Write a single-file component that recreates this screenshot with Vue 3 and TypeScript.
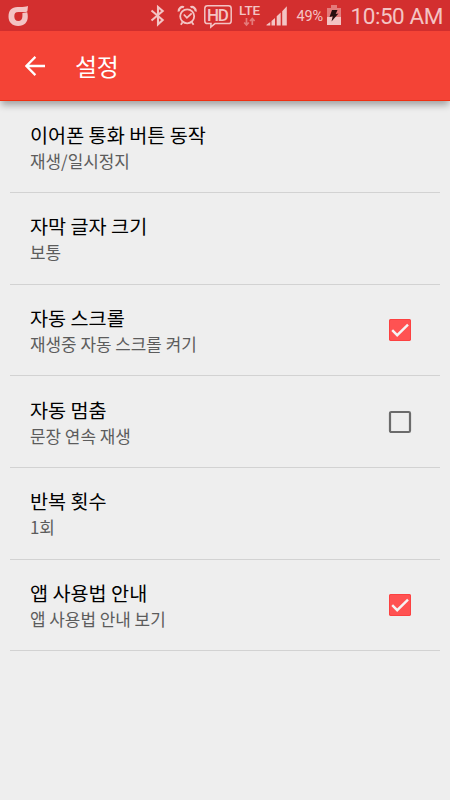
<script setup lang="ts">
interface Setting {
  title: string
  summary: string
  checked?: boolean
}

const settings: Setting[] = [
  { title: '이어폰 통화 버튼 동작', summary: '재생/일시정지' },
  { title: '자막 글자 크기', summary: '보통' },
  { title: '자동 스크롤', summary: '재생중 자동 스크롤 켜기', checked: true },
  { title: '자동 멈춤', summary: '문장 연속 재생', checked: false },
  { title: '반복 횟수', summary: '1회' },
  { title: '앱 사용법 안내', summary: '앱 사용법 안내 보기', checked: true },
]
</script>

<template>
  <div class="screen">
    <header class="status">
      <svg class="status-icons" width="290" height="31" viewBox="0 0 290 31" fill="none" stroke="#f3c4c4">
        <path d="M28 6l-.6 5.200c-1.200 1-3.500 1-5.400.8h-3.500c-3.200 0-4.200 1.500-4.200 4.300 0 3.200 1.400 4.700 4 4.700s4.100-1.500 4.100-4.700V13l4.800-.7c.4 1.200.6 2.500.6 4.200 0 6-3.500 9.400-9.600 9.400S8.500 22.300 8.500 16.500C8.500 10.500 11.500 7 17.500 7 21.500 7 25 7.200 28 6z" fill="#f3c4c4" stroke="none" />
        <path d="M151.500 10.500l11.200 9.500-4.700 4.300V7l4.700 4-11.200 9.500" stroke-width="2.100" />
        <circle cx="187.200" cy="16.300" r="7" stroke-width="1.800" />
        <path d="M183.800 14.500l3.100 3.300 4.800-4.500M182.600 22.300l-1.800 2.500M191.800 22.300l1.800 2.500" stroke-width="1.800" />
        <path d="M178.700 11.500c-.4-3 2.700-5.500 5.200-4.200M195.700 11.500c.4-3-2.700-5.500-5.200-4.200" stroke-width="2.300" />
        <path d="M207.500 5.700h21q2.700 0 2.700 2.700v12.500q0 2.700-2.700 2.700H215l-4.200 3.400.2-3.400h-3.500q-2.700 0-2.700-2.700V8.400Q204.800 5.700 207.500 5.700z" stroke-width="1.500" />
        <path d="M246.500 18v7m-2.300-2.500l2.300 2.500 2.300-2.500M252.300 25v-6.500m-2.300 2.500l2.300-2.500 2.300 2.500" stroke="#e47b7b" stroke-width="1.700" />
        <g fill="#f3c4c4" stroke="none">
          <path d="M266.500 25.500v-.8l3.800-2.800v3.600zM271.500 25.500v-4.500l3.500-3v7.500zM276.700 25.500v-9.300l4-3.700v13zM282.200 25.500V11.200l4.600-5v19.300z" />
        </g>
      </svg>
      <span class="hd">HD</span>
      <span class="lte">LTE</span>
      <span class="percent">49%</span>
      <svg class="battery" width="14" height="21" viewBox="0 0 14 21">
        <path fill="#e47b7b" d="M4 0h6v3h4v9H0V3h4z" />
        <path fill="#f3c4c4" d="M0 12h14v8H0z" />
        <path fill="#281011" d="M5 5h5.500L8.700 9l2.800-.5L4.500 16.500l1.200-5.200-3.200.7z" />
      </svg>
      <time class="clock">10:50 AM</time>
    </header>

    <nav class="toolbar">
      <svg width="20" height="20" viewBox="0 0 20 20" fill="none" stroke="#fff" stroke-width="2.300">
        <path d="M10.400.9L1.400 10l9 9.100M1.800 10H20" />
      </svg>
      <h1>설정</h1>
    </nav>

    <main class="settings">
      <section v-for="item in settings" :key="item.title" class="row">
        <div class="copy">
          <h2>{{ item.title }}</h2>
          <p>{{ item.summary }}</p>
        </div>
        <svg v-if="item.checked" class="check" width="24" height="24" viewBox="0 0 24 24">
          <rect x="1" y="1" width="22" height="22" rx="1.800" fill="#ff5252" />
          <rect x="1.500" y="1.500" width="21" height="21" rx="1.300" fill="none" stroke="#fc4141" />
          <path d="M4.200 12.200l5 5L20 6.600" fill="none" stroke="#f5f5f5" stroke-width="2.400" />
        </svg>
        <svg v-else-if="item.checked === false" class="check" width="24" height="24" viewBox="0 0 24 24">
          <rect x="2" y="2" width="20" height="20" rx="1.300" fill="none" stroke="#6b6b6b" stroke-width="2.200" />
        </svg>
      </section>
    </main>
  </div>
</template>

<style>
body {
  background: #eee;
}
</style>

<style scoped>
.screen {
  width: 450px;
  height: 800px;
  overflow: hidden;
  background: #eee;
  font-family: "Noto Sans CJK KR", sans-serif;
}
.status {
  position: relative;
  height: 31px;
  background: #d32f2f;
  color: #f3c4c4;
  font-family: Roboto, sans-serif;
  white-space: nowrap;
}
.status-icons {
  display: block;
}
.hd, .lte, .percent, .battery, .clock {
  position: absolute;
}
.hd {
  left: 207px;
  top: 6px;
  font-size: 17px;
  line-height: 18px;
  font-weight: 500;
  letter-spacing: -1.300px;
}
.lte {
  left: 239px;
  top: 3px;
  font-size: 13.500px;
  line-height: 15px;
  font-weight: 500;
  letter-spacing: -.2px;
}
.percent {
  left: 296.500px;
  top: 8px;
  font-size: 14.500px;
  line-height: 17px;
  letter-spacing: -.2px;
}
.battery {
  left: 327px;
  top: 5px;
}
.clock {
  left: 350.500px;
  top: 3px;
  font-size: 22.500px;
  line-height: 26px;
  letter-spacing: -.45px;
}
.toolbar {
  position: relative;
  box-sizing: border-box;
  height: 70px;
  padding-left: 25px;
  display: flex;
  align-items: center;
  gap: 30px;
  background: #f44336;
  border-bottom: 1px solid #ef3012;
  box-shadow: 0 5px 7px -1px rgba(0, 0, 0, .32);
}
h1, h2, p {
  margin: 0;
  font-weight: 400;
  white-space: nowrap;
}
h1 {
  color: #fff;
  font-size: 24px;
  line-height: 34px;
  letter-spacing: -.3px;
}
.settings {
  padding: .5px 10px 0;
}
.row {
  box-sizing: border-box;
  height: 91.660px;
  padding: 0 28px 0 20px;
  display: flex;
  align-items: center;
  justify-content: space-between;
  border-bottom: 1px solid #d2d2d2;
}
h2 {
  color: #000;
  font-size: 19.650px;
  line-height: 27px;
}
p {
  color: #5c5c5c;
  font-size: 16.900px;
  line-height: 25px;
}
</style>
